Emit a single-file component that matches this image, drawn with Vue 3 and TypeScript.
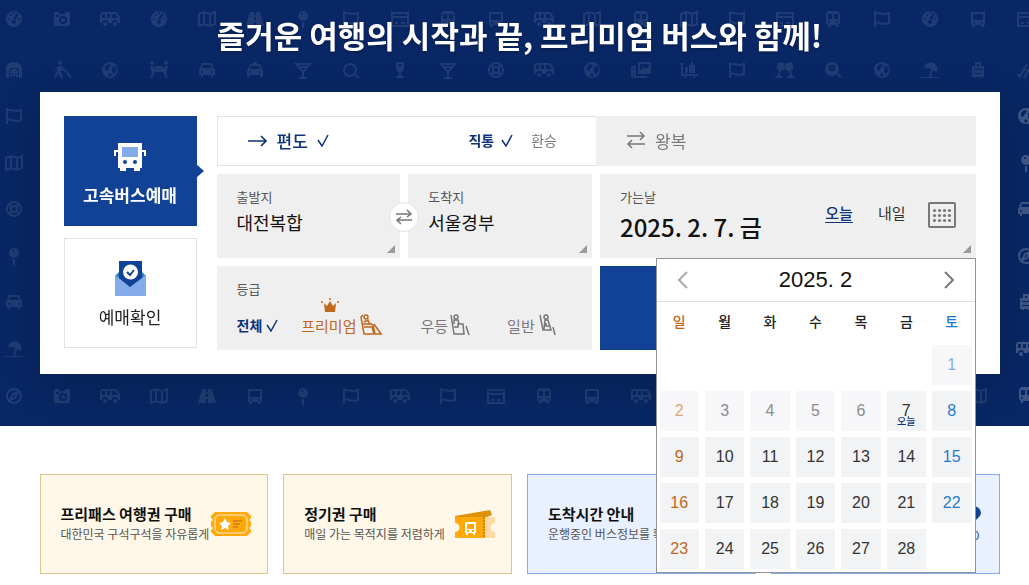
<script setup lang="ts">
import { ref } from 'vue'

interface Glyph {
  fill?: string
  line?: string
}

interface Mark {
  kind: string
  x: number
  y: number
}

const dot = (x: number, y: number, r: number): string =>
  `M${x - r} ${y}a${r} ${r} 0 1 0 ${r * 2} 0a${r} ${r} 0 1 0 ${-r * 2} 0Z`

const glyphs: Record<string, Glyph> = {
  gauge: {
    fill:
      dot(0, 0, 8) + dot(-5, 0, 1) + dot(5, 0, 1) + dot(-3, -4, 1) + dot(0, 3, 2) +
      'M3 -6L5 -5L1 1L-1 0Z' + dot(0, -6, 1),
  },
  camera: {
    fill: 'M-8 -7H-3V-5H2L4 -7H8V7H-8Z' + dot(1, 1, 4) + dot(1, 1, 2) + 'M-6 -4H-3V-2H-6Z',
  },
  van: {
    fill:
      'M-8 -7H5C8 -6 10 -3 10 0V4H8A3 3 0 0 0 2 4H-2A3 3 0 0 0 -8 4H-10V-5ZM-8 -5V-1H-5V-5ZM-3 -5V-1H0V-5ZM2 -5V-1H8L5 -5Z' +
      dot(-5, 5, 2) + dot(5, 5, 2),
  },
  map: { line: 'M-8 -5L-3 -7L3 -5L8 -7V5L3 7L-3 5L-8 7ZM-3 -7V5M3 -5V7' },
  road: { fill: 'M-5 -7H-1V-4H1V-7H5L9 7H1V3H-1V7H-9ZM-1 -2V1H1V-2Z' },
  pin: { fill: dot(0, -3, 5) + dot(-1, -5, 1) + 'M-1 3H1V9H-1Z' },
  flag: { line: 'M-7 -8V8M-7 -5C-3 -8 1 -3 7 -6V4C1 7 -3 2 -7 4' },
  card: { line: 'M-8 -6H8V7H-8ZM-8 -2H8M-5 4H-2M1 4H5' },
  tram: {
    fill:
      'M-5 -8H5L7 -5V4L5 6V8H3V6H-3V8H-5V6L-7 4V-5ZM-5 -5V0H-1V-5ZM1 -5V0H5V-5Z' +
      dot(-4, 3, 1) + dot(4, 3, 1),
  },
  bus: {
    fill:
      'M-7 -7H7V6H6V8H3V6H-3V8H-6V6H-7ZM-5 -5V1H5V-5Z' + dot(-4, 4, 1) + dot(4, 4, 1),
  },
  garage: {
    fill:
      'M-8 8V-2A8 6 0 0 1 8 -2V8H5V1L3 -2H-3L-5 1V8ZM-4 2L-2 -1H2L4 2V7H2V6H-2V7H-4Z' + dot(-2, 4, 1) + dot(2, 4, 1),
  },
  hiker: {
    fill: dot(-2, -7, 2) + 'M-4 -4H0L2 -1L5 1L4 2L0 0L-1 2L1 8H-1L-4 3L-6 8H-8L-5 0V-2L-7 1H-8Z',
    line: 'M4 1L9 8',
  },
  globe: {
    fill: dot(0, 0, 8) + 'M-5 -3L-2 -6L1 -5L-1 -2L-3 1L-5 0ZM2 -3L6 -4L7 0L4 4L2 2ZM-1 3L2 5L0 7L-2 5Z',
  },
  people: {
    fill: dot(-7, -7, 2) + dot(7, -7, 2) + 'M-9 -4H-6L-4 -1V-4H4V-1L6 -4H9L7 3L9 8H7L4 2H-4L-7 8H-9L-7 3Z',
  },
  car: {
    fill:
      'M-5 -7H5L7 -2L8 0V5H6V7H4V5H-4V7H-6V5H-8V0L-7 -2ZM-4 -5L-5 -2H5L4 -5Z' + dot(-5, 2, 1) + dot(5, 2, 1),
  },
  taxi: {
    fill:
      'M-2 -8H2V-6H5L7 -1L8 1V7H5V5H-5V7H-8V1L-7 -1L-5 -6H-2ZM-4 -4L-5 -1H5L4 -4Z' + dot(-5, 2, 1) + dot(5, 2, 1),
  },
  martini: { line: 'M-7 -6H7L0 2ZM0 2V8M-4 8H4M-4 -3H4' },
  search: { line: dot(-1, 0, 6) + 'M3 4L8 8' },
  wine: { fill: 'M-4 -8H4V-2C4 0 2 2 1 2V6H4V8H-4V6H-1V2C-2 2 -4 0 -4 -2ZM-2 -6V-4H2V-6Z' },
  buoy: { line: dot(0, 0, 7) + dot(0, 0, 3) + 'M-5 -5L-2 -2M5 -5L2 -2M-5 5L-2 2M5 5L2 2' },
  photos: {
    fill: 'M-3 -8H10V4H-3ZM-1 -6V1L3 -3L5 -1L8 -4V-6ZM-10 -4H-5V6H6V8H-10ZM-8 -2V0H-7V-2ZM-8 3V5H-7V3Z',
  },
  cart: { fill: 'M-9 -7H-6V4H9V6H-8V-5H-9ZM-4 -3H-1V3H-4ZM0 -5H6V3H0ZM2 -8H4V-5H2Z' + dot(-4, 7, 1) + dot(5, 7, 1) },
  toast: {
    fill: 'M-7 -8L-1 -7L0 -3C0 0 -2 1 -4 1L-5 5L-2 7V8H-10V7L-7 5L-6 1C-8 0 -9 -2 -8 -4ZM7 -8L1 -7L0 -3C0 0 2 1 4 1L5 5L2 7V8H10V7L7 5L6 1C8 0 9 -2 8 -4Z',
  },
  finder: { fill: dot(-1, -1, 7) + dot(-1, -2, 3) + dot(-1, -2, 1) + 'M3 4L5 3L9 7L7 8Z' },
  beach: { fill: 'M-6 -2C-5 -7 0 -9 4 -7C7 -5 8 -2 7 2L3 0L1 7H9V8H-9V7H-1L1 -1L-2 -2Z' },
  case: { fill: 'M-3 -8H3V-4H6V7H4V8H2V7H-2V8H-4V7H-6V-4H-3ZM-1 -6V-4H1V-6ZM-4 -1V0H4V-1ZM-4 3V4H4V3Z' },
  planes: { line: 'M-7 8L1 -6M-2 8L6 -6M-9 5L-4 5M-3 -1L5 2' },
  compass: { line: dot(0, 0, 7) + 'M4 -4L1 2L-4 4L-1 -2Z' },
}

const step = 48
const across = (kinds: string[], y: number): Mark[] =>
  kinds.map((kind, i) => ({ kind, x: 14 + Math.round(i * (step + 0.2)), y }))
const down = (kinds: string[], x: number): Mark[] =>
  kinds.map((kind, i) => ({ kind, x, y: 116 + Math.round(i * 46.5) }))

const marks: Mark[] = [
  ...across(
    'gauge camera van gauge map road pin flag card tram bus van map tram map flag card tram flag gauge bus card'.split(' '),
    19,
  ),
  ...across(
    'garage hiker globe people car taxi martini search wine martini buoy van globe photos cart flag toast finder globe beach case planes'.split(' '),
    70,
  ),
  ...down('flag map buoy pin car beach'.split(' '), 14),
  ...across(
    'compass camera van map road bus pin flag van flag card tram bus van map gauge camera car bus flag map'.split(' '),
    396,
  ),
]
const brightMarks: Mark[] = down('globe pin car compass case van tram'.split(' '), 1026)

const weekdays = ['일', '월', '화', '수', '목', '금', '토']
const today = 7
const selected = ref(today)
const weeks: number[][] = Array.from({ length: 5 }, (_, w) =>
  Array.from({ length: 7 }, (_, d) => {
    const day = w * 7 + d - 5
    return day > 0 && day < 29 ? day : 0
  }),
)
const weekdayOf = (day: number): string => weekdays[(day + 5) % 7]

const from = ref('대전복합')
const to = ref('서울경부')
const calendarOpen = ref(true)
const swap = (): void => {
  ;[from.value, to.value] = [to.value, from.value]
}
const pick = (day: number): void => {
  selected.value = day
  calendarOpen.value = false
}
</script>

<template>
  <div class="page">
    <section class="hero">
      <svg class="pattern" aria-hidden="true">
        <g class="faint">
          <g v-for="(m, i) in marks" :key="i" :transform="`translate(${m.x} ${m.y})`">
            <path v-if="glyphs[m.kind].fill" class="solid" :d="glyphs[m.kind].fill" />
            <path v-if="glyphs[m.kind].line" class="line" :d="glyphs[m.kind].line" />
          </g>
        </g>
        <g class="bright">
          <g v-for="(m, i) in brightMarks" :key="i" :transform="`translate(${m.x} ${m.y})`">
            <path v-if="glyphs[m.kind].fill" class="solid" :d="glyphs[m.kind].fill" />
            <path v-if="glyphs[m.kind].line" class="line" :d="glyphs[m.kind].line" />
          </g>
        </g>
      </svg>

      <h1>즐거운 여행의 시작과 끝, 프리미엄 버스와 함께!</h1>

      <div class="booking">
        <nav class="side">
          <button type="button" class="side-btn active">
            <svg width="34" height="32" viewBox="0 0 34 32" aria-hidden="true">
              <path fill="#fff" d="M5 1H29V26H27V29H21V26H13V29H7V26H5Z" />
              <path fill="none" stroke="#fff" stroke-width="2" d="M5 9H2V14M29 9H32V14" />
              <path fill="#83aae9" d="M9 5H25V15H9Z" />
              <circle cx="12" cy="20" r="2" fill="#124296" />
              <circle cx="22" cy="20" r="2" fill="#124296" />
            </svg>
            고속버스예매
          </button>
          <button type="button" class="side-btn">
            <svg width="31" height="36" viewBox="0 0 31 36" aria-hidden="true">
              <path fill="#2f7fd0" d="M0 16L4 12H27L31 16V22H0Z" />
              <path fill="#124296" d="M4 1H27V19L15 28L4 19Z" />
              <path fill="#83aae9" d="M0 15L15 27L31 15V36H0Z" />
              <circle cx="15.5" cy="12" r="7.5" fill="#fff" />
              <path fill="none" stroke="#124296" stroke-width="2" d="M12 12L15 15L19 10" />
            </svg>
            예매확인
          </button>
        </nav>

        <div class="form">
          <div class="tabs">
            <div class="tab on">
              <button type="button" class="plain way">
                <svg width="20" height="14" viewBox="0 0 20 14" aria-hidden="true">
                  <path class="ink" stroke-width="1.7" d="M0 8H18M13 3L18 8L13 13" />
                </svg>
                편도
                <svg width="12" height="13" viewBox="0 0 12 13" aria-hidden="true">
                  <path class="ink" stroke-width="1.5" d="M1 6L5 12L11 1" />
                </svg>
              </button>
              <span class="routes">
                <button type="button" class="plain direct">
                  직통
                  <svg width="12" height="13" viewBox="0 0 12 13" aria-hidden="true">
                    <path class="ink" stroke-width="1.5" d="M1 6L5 12L11 1" />
                  </svg>
                </button>
                <button type="button" class="plain transfer">환승</button>
              </span>
            </div>
            <button type="button" class="plain tab round">
              <svg width="20" height="18" viewBox="0 0 20 18" aria-hidden="true">
                <path class="ink" stroke-width="1.5" d="M1 5H18M14 1L18 5L14 9M19 13H2M6 9L2 13L6 17" />
              </svg>
              왕복
            </button>
          </div>

          <div class="fields">
            <div class="stations">
              <button type="button" class="plain field corner">
                <small>출발지</small>
                <span class="station">{{ from }}</span>
              </button>
              <button type="button" class="plain field corner">
                <small>도착지</small>
                <span class="station">{{ to }}</span>
              </button>
              <button type="button" class="plain swap" aria-label="출발지 도착지 바꾸기" @click="swap">
                <svg width="18" height="16" viewBox="0 0 18 16" aria-hidden="true">
                  <path class="ink" stroke-width="1.5" d="M1 5H16M12 1L16 5L12 8M17 11H2M6 8L2 11L6 15" />
                </svg>
              </button>
            </div>

            <div class="field corner date">
              <div>
                <small>가는날</small>
                <strong>2025. 2. {{ selected }}. {{ weekdayOf(selected) }}</strong>
              </div>
              <div class="quick">
                <button type="button" class="plain now" @click="pick(today)">오늘</button>
                <button type="button" class="plain next-day" @click="pick(today + 1)">내일</button>
                <button type="button" class="plain" aria-label="달력" @click="calendarOpen = !calendarOpen">
                  <svg width="28" height="26" viewBox="0 0 28 26" aria-hidden="true">
                    <rect x="1" y="1" width="26" height="24" rx="1" fill="none" stroke="#77777c" stroke-width="2" />
                    <template v-for="r in 3" :key="r">
                      <circle v-for="c in 4" :key="c" :cx="c * 5 + 1.5" :cy="r * 5 + 3.5" r="1.6" fill="#77777c" />
                    </template>
                  </svg>
                </button>
              </div>

              <div v-if="calendarOpen" class="calendar">
                <div class="cal-head">
                  <button type="button" class="plain prev" aria-label="이전 달">
                    <svg width="12" height="18" viewBox="0 0 12 18" aria-hidden="true">
                      <path d="M10 1L2 9L10 17" />
                    </svg>
                  </button>
                  <span>2025. 2</span>
                  <button type="button" class="plain next" aria-label="다음 달">
                    <svg width="12" height="18" viewBox="0 0 12 18" aria-hidden="true">
                      <path d="M2 1L10 9L2 17" />
                    </svg>
                  </button>
                </div>
                <table>
                  <thead>
                    <tr>
                      <th v-for="w in weekdays" :key="w" scope="col">{{ w }}</th>
                    </tr>
                  </thead>
                  <tbody>
                    <tr v-for="(week, wi) in weeks" :key="wi">
                      <td v-for="(day, di) in week" :key="di">
                        <button
                          v-if="day"
                          type="button"
                          class="plain day"
                          :class="{ past: day < today, today: day === today }"
                          @click="pick(day)"
                        >
                          <span>{{ day }}</span>
                          <em v-if="day === today">오늘</em>
                        </button>
                      </td>
                    </tr>
                  </tbody>
                </table>
              </div>
            </div>

            <div class="field grade">
              <small>등급</small>
              <div class="grades">
                <button type="button" class="plain all">
                  전체
                  <svg width="12" height="13" viewBox="0 0 12 13" aria-hidden="true">
                    <path class="ink" stroke-width="1.5" d="M1 6L5 12L11 1" />
                  </svg>
                </button>
                <button type="button" class="plain premium">
                  <svg class="crown" width="18" height="14" viewBox="0 0 18 14" aria-hidden="true">
                    <path fill="#c0681c" d="M3 5L6 8L9 3L12 8L15 5L14 14H4Z" />
                    <circle cx="1" cy="4" r="1" fill="#c0681c" />
                    <circle cx="9" cy="1" r="1" fill="#c0681c" />
                    <circle cx="17" cy="4" r="1" fill="#c0681c" />
                  </svg>
                  프리미엄
                  <svg width="22" height="22" viewBox="0 0 22 22" aria-hidden="true">
                    <path class="ink" stroke-width="1.5" d="M3 1L1 3L4 20H14L12 13H4M4 8L8 6L9 9L13 11L15 20M3 10H12M14 10L21 20H15" />
                    <circle class="ink" stroke-width="1.5" cx="6" cy="3" r="2" />
                  </svg>
                </button>
                <button type="button" class="plain deluxe">
                  우등
                  <svg width="20" height="22" viewBox="0 0 20 22" aria-hidden="true">
                    <path class="ink" stroke-width="1.5" d="M1 1L4 20H14L13 10H8V13H4M4 10V6H8L9 10M16 12L19 21" />
                    <circle class="ink" stroke-width="1.5" cx="6" cy="3" r="2" />
                  </svg>
                </button>
                <button type="button" class="plain standard">
                  일반
                  <svg width="18" height="22" viewBox="0 0 18 22" aria-hidden="true">
                    <path class="ink" stroke-width="1.5" d="M1 1L4 16H12L9 6H6L5 15M7 9V12H10M14 13L16 21" />
                    <circle class="ink" stroke-width="1.5" cx="7" cy="3" r="2" />
                  </svg>
                </button>
              </div>
            </div>
            <button type="button" class="plain submit" aria-label="조회하기"></button>
          </div>
        </div>
      </div>
    </section>

    <section class="links">
      <div class="link-grid">
        <a href="#" class="link gold">
          <span class="link-text"><b>프리패스 여행권 구매</b><span>대한민국 구석구석을 자유롭게</span></span>
          <svg width="40" height="24" viewBox="0 0 40 24" aria-hidden="true">
            <path fill="#ffa90a" d="M4 0H36L40 4V6L38 8L40 10V14L38 16L40 18V20L36 24H4L0 20V18L2 16L0 14V10L2 8L0 6V4Z" />
            <path fill="none" stroke="#ffd58a" stroke-width="1.5" d="M7 3H33L36 6V18L33 21H7L4 18V6Z" />
            <path fill="#fff" d="M14 6L16 10L20 11L17 14L18 18L14 16L10 18L11 14L8 11L12 10Z" />
            <path stroke="#cf7d13" stroke-width="1.5" d="M22 9H31M22 12H29M22 15H27" />
          </svg>
        </a>
        <a href="#" class="link gold">
          <span class="link-text"><b>정기권 구매</b><span>매일 가는 목적지를 저렴하게</span></span>
          <svg width="40" height="29" viewBox="0 0 40 29" aria-hidden="true">
            <path fill="#dc920d" d="M0 6L35 0L37 5L32 7H0Z" />
            <path fill="#ffa90a" d="M0 7H30V28H0V22A4 4 0 0 0 0 13Z" />
            <path fill="#ffdaa4" d="M30 7H40V13A4 4 0 0 0 40 22V28H30Z" />
            <path stroke="#d27f10" stroke-width="2" stroke-dasharray="2 1" d="M29 7V28" />
            <path fill="#fff" fill-rule="evenodd" d="M10 12H21V23H20V25H18V23H13V25H11V23H10ZM12 14V19H19V14ZM12 20V22H14V20ZM17 20V22H19V20Z" />
          </svg>
        </a>
        <a href="#" class="link blue">
          <span class="link-text"><b>도착시간 안내</b><span>운행중인 버스정보를 확인</span></span>
        </a>
        <a href="#" class="link blue end" aria-label="노선 안내">
          <svg width="30" height="36" viewBox="0 0 30 36" aria-hidden="true">
            <path fill="#124296" fill-rule="evenodd" d="M20 0A8 7 0 0 1 28 7C28 11 20 16 20 16S12 11 12 7A8 7 0 0 1 20 0ZM20 4A3 3 0 1 0 20 10A3 3 0 1 0 20 4Z" />
            <path fill="none" stroke="#4e78bd" stroke-width="1.5" d="M4 25H21A4 4 0 0 1 21 34H4" />
          </svg>
        </a>
      </div>
    </section>
  </div>
</template>

<style>
body {
  margin: 0;
  background: #fff;
}
</style>

<style scoped>
.page {
  font-family: 'Noto Sans CJK KR', 'Noto Sans', sans-serif;
  color: #111;
  overflow: hidden;
}

.page *,
.page *::before,
.page *::after {
  box-sizing: border-box;
}

svg {
  display: block;
  flex: none;
}

button {
  font-family: inherit;
  cursor: pointer;
}

.plain {
  border: 0;
  padding: 0;
  background: none;
  color: inherit;
  font-size: inherit;
  text-align: left;
}

.ink {
  fill: none;
  stroke: currentColor;
}

.hero {
  position: relative;
  z-index: 1;
  padding: 12px 0 52px 10px;
  background: #092765;
}

.pattern {
  position: absolute;
  inset: 0;
  width: 100%;
  height: 100%;
}

.faint {
  opacity: 0.1;
}

.bright {
  opacity: 0.22;
}

.solid {
  fill: #fff;
  fill-rule: evenodd;
}

.line {
  fill: none;
  stroke: #fff;
  stroke-width: 2;
}

h1 {
  position: relative;
  max-width: 960px;
  margin: 0 auto 34px;
  font-size: 31px;
  line-height: 46px;
  font-weight: 700;
  text-align: center;
  white-space: nowrap;
  color: #fff;
  text-shadow: 0 1px 3px rgba(0, 0, 0, 0.3);
}

.booking {
  position: relative;
  display: flex;
  gap: 20px;
  max-width: 960px;
  margin: 0 auto;
  padding: 24px;
  background: #fff;
  box-shadow: 0 10px 40px rgba(0, 0, 0, 0.2);
}

.side {
  display: flex;
  flex-direction: column;
  gap: 12px;
  flex: 0 0 133px;
}

.side-btn {
  position: relative;
  display: flex;
  flex-direction: column;
  align-items: center;
  justify-content: flex-end;
  gap: 8px;
  height: 110px;
  padding: 0 0 17px;
  border: 1px solid #e2e2e4;
  background: #fff;
  color: #222;
  font-size: 17px;
  line-height: 26px;
}

.side-btn.active {
  border-color: #124296;
  background: #124296;
  color: #fff;
  font-weight: 700;
}

.side-btn.active::after {
  content: '';
  position: absolute;
  left: 100%;
  top: 47px;
  border: 7px solid transparent;
  border-left: 8px solid #124296;
  border-right: 0;
}

.form {
  flex: 1;
  min-width: 0;
  display: flex;
  flex-direction: column;
  gap: 8px;
}

.tabs {
  display: grid;
  grid-template-columns: 1fr 1fr;
}

.tab {
  display: flex;
  align-items: center;
  height: 50px;
  padding: 0 30px 2px;
  font-size: 17px;
}

.tab.on {
  justify-content: space-between;
  padding-right: 39px;
  border: 1px solid #e2e2e4;
  border-right: 0;
  color: #0f3278;
}

.way {
  display: flex;
  align-items: center;
  gap: 9px;
  font-weight: 500;
}

.routes {
  display: flex;
  gap: 18px;
  font-size: 14px;
}

.direct {
  display: flex;
  align-items: center;
  gap: 7px;
  font-weight: 700;
}

.transfer {
  color: #77777c;
}

.tab.round {
  gap: 9px;
  background: #efefef;
  color: #77777c;
}

.fields {
  display: grid;
  grid-template-columns: 1fr 1fr;
  gap: 8px;
}

.field {
  position: relative;
  height: 84px;
  padding: 13px 20px;
  background: #efefef;
}

.field small {
  display: block;
  font-size: 13px;
  line-height: 20px;
  color: #555;
}

.corner::after {
  content: '';
  position: absolute;
  right: 5px;
  bottom: 5px;
  border-left: 8px solid transparent;
  border-bottom: 8px solid #999ba0;
}

.stations {
  position: relative;
  display: grid;
  grid-template-columns: 1fr 1fr;
  gap: 8px;
}

.stations .field {
  display: flex;
  flex-direction: column;
}

.station {
  font-size: 18px;
  line-height: 30px;
  color: #111;
}

.swap {
  position: absolute;
  left: 50%;
  top: 50%;
  display: grid;
  place-items: center;
  width: 30px;
  height: 30px;
  margin: -14px 0 0 -15px;
  border: 1px solid #e2e2e4;
  border-radius: 50%;
  background: #fff;
  color: #77777c;
}

.date {
  display: flex;
  justify-content: space-between;
}

.date strong {
  display: block;
  font-size: 24px;
  line-height: 40px;
  font-weight: 500;
  white-space: nowrap;
}

.quick {
  display: flex;
  align-items: flex-start;
  padding-top: 15px;
  font-size: 15px;
  line-height: 22px;
}

.now {
  margin-right: 25px;
  font-weight: 500;
  color: #0f3278;
  text-decoration: underline;
  text-underline-offset: 3px;
}

.next-day {
  margin-right: 22px;
  color: #333;
}

.calendar {
  position: absolute;
  right: 0;
  top: 100%;
  z-index: 5;
  width: 320px;
  border: 1px solid #939397;
  background: #fff;
  font-family: 'Liberation Sans', 'Noto Sans CJK KR', sans-serif;
}

.cal-head {
  display: flex;
  align-items: center;
  justify-content: space-between;
  height: 43px;
  padding: 0 20px;
  border-bottom: 1px solid #dfdfe2;
  font-size: 22px;
}

.cal-head path {
  fill: none;
  stroke: #77777c;
  stroke-width: 2;
}

.cal-head .prev path {
  stroke: #aaaaaf;
}

table {
  width: 100%;
  table-layout: fixed;
  border-collapse: collapse;
}

th {
  height: 40px;
  padding: 0 0 2px;
  font-size: 14px;
  font-weight: 500;
  color: #222;
}

td {
  height: 46px;
  padding: 3px;
}

.day {
  display: flex;
  flex-direction: column;
  align-items: center;
  justify-content: center;
  width: 100%;
  height: 40px;
  background: #f2f3f5;
  font-size: 16px;
  line-height: 18px;
  color: #333;
}

.day.today {
  justify-content: flex-start;
  padding-top: 13px;
  line-height: 14px;
}

.day em {
  font-size: 10px;
  line-height: 8px;
  font-weight: 500;
  font-style: normal;
  color: #0f3278;
}

th:first-child,
td:first-child .day {
  color: #c0681c;
}

th:last-child,
td:last-child .day {
  color: #1f7bce;
}

.day.past {
  background: #f7f7f9;
  color: #8c8c91;
}

td:first-child .day.past {
  color: #dba86f;
}

td:last-child .day.past {
  color: #7fb3e2;
}

.grades {
  display: flex;
  align-items: center;
  padding-top: 15px;
  font-size: 15px;
  line-height: 22px;
  color: #77777c;
}

.grades button {
  position: relative;
  display: flex;
  align-items: center;
  white-space: nowrap;
}

.grades .all {
  gap: 4px;
  margin-right: 23px;
  font-size: 14px;
  font-weight: 700;
  color: #0f3278;
}

.grades .premium {
  gap: 4px;
  margin-right: 38px;
  color: #c0681c;
}

.crown {
  position: absolute;
  left: 20px;
  top: -16px;
}

.grades .deluxe {
  gap: 2px;
  margin-right: 37px;
}

.grades .standard {
  gap: 4px;
}

.submit {
  background: #124296;
}

.links {
  padding: 48px 0 11px 10px;
}

.link-grid {
  display: grid;
  grid-template-columns: repeat(4, 1fr);
  gap: 15px;
  max-width: 960px;
  margin: 0 auto;
}

.link {
  display: flex;
  align-items: center;
  justify-content: space-between;
  height: 100px;
  padding: 0 16px 0 20px;
  border: 1px solid #dcc58f;
  background: #fff8e8;
  color: #111;
  text-decoration: none;
}

.link.blue {
  border-color: #83aae9;
  background: #e9f0ff;
}

.link.end {
  justify-content: flex-end;
}

.link-text {
  display: flex;
  flex-direction: column;
  white-space: nowrap;
}

.link-text b {
  font-size: 15px;
  line-height: 20px;
}

.link-text span {
  font-size: 12px;
  line-height: 20px;
  color: #555;
}
</style>
